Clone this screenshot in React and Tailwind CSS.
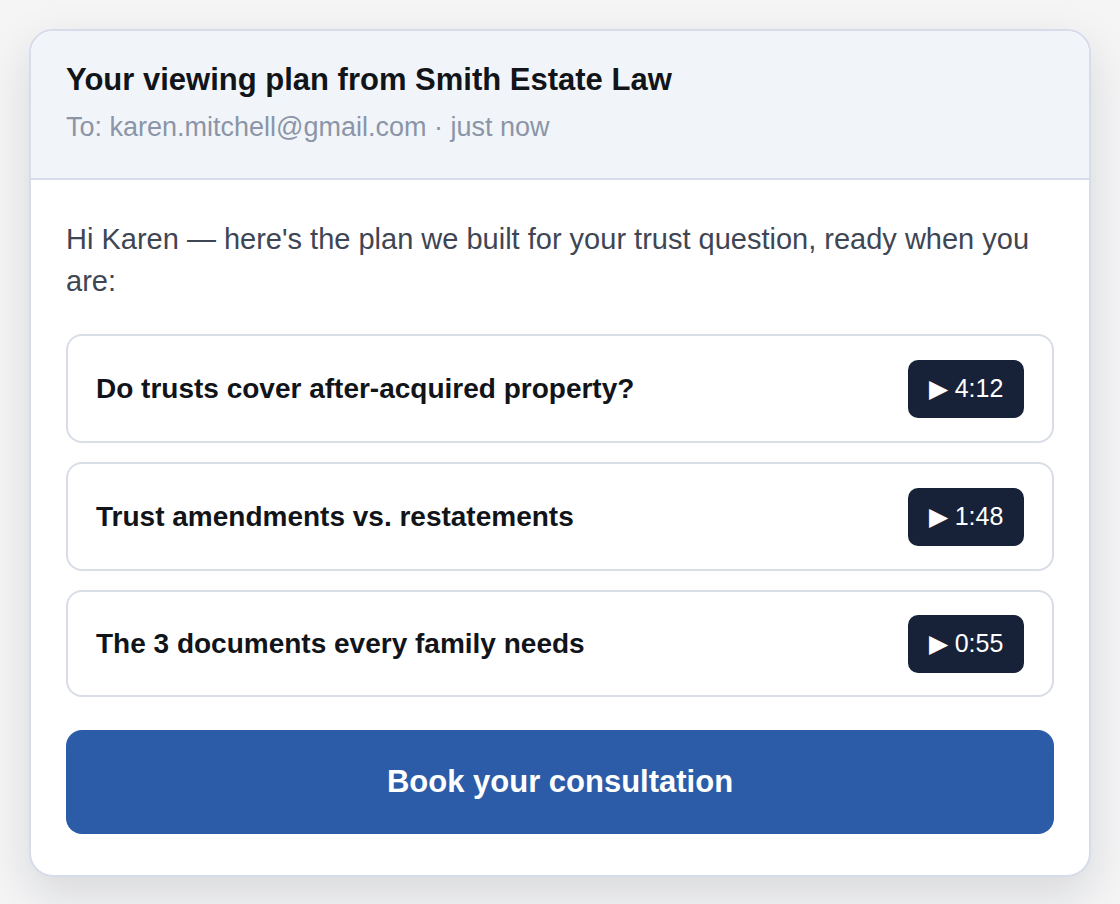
import React from "react";

const videos = [
  { title: "Do trusts cover after-acquired property?", time: "4:12", h: "h-[109px]" },
  { title: "Trust amendments vs. restatements", time: "1:48", h: "h-[109px]" },
  { title: "The 3 documents every family needs", time: "0:55", h: "h-[107px]" },
];

const App = () => {
  return (
    <div
      className="min-h-screen bg-[#f5f5f6] p-[29px]"
      style={{ fontFamily: '"Liberation Sans", Arial, sans-serif' }}
    >
      <div className="w-[1062px] overflow-hidden rounded-[24px] border-2 border-[#d6dcea] bg-white shadow-[0_18px_48px_rgba(15,23,42,0.13)]">
        {/* Header */}
        <div className="h-[149px] border-b-2 border-[#d6dcea] bg-[#f1f5f9] px-[35px] pt-[30px]">
          <h1 className="text-[31px] font-bold leading-[38px] text-[#111418]">
            Your viewing plan from Smith Estate Law
          </h1>
          <p className="mt-[13px] text-[27px] leading-[30px] text-[#8b95a7]">
            To: karen.mitchell@gmail.com · just now
          </p>
        </div>

        {/* Body */}
        <div className="px-[35px] pt-[38px] pb-[41px]">
          <p className="text-[29px] leading-[42px] text-[#3e4654]">
            Hi Karen — here's the plan we built for your trust question, ready when you are:
          </p>

          <div className="mt-[32px] flex flex-col gap-[19px]">
            {videos.map((v) => (
              <div
                key={v.title}
                className={`flex ${v.h} items-center justify-between rounded-[16px] border-2 border-[#d9dde6] pl-[28px] pr-[28px]`}
              >
                <span className="text-[28px] font-bold text-[#111418]">{v.title}</span>
                <span className="flex h-[58px] w-[116px] items-center justify-center rounded-[10px] bg-[#172239] text-[25px] text-white">
                  ▶ {v.time}
                </span>
              </div>
            ))}
          </div>

          <button className="mt-[33px] flex h-[104px] w-full items-center justify-center rounded-[16px] bg-[#2c5ca8] text-[31px] font-bold text-white">
            Book your consultation
          </button>
        </div>
      </div>
    </div>
  );
};

export default App;
